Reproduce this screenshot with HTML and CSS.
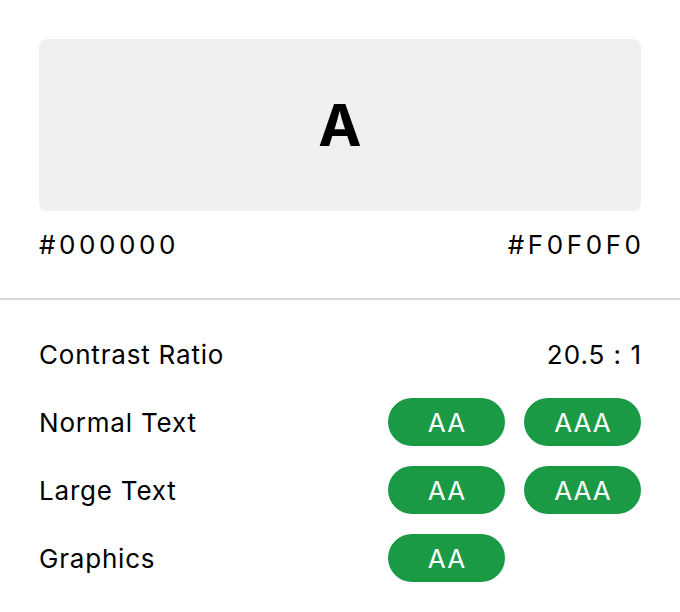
FILE: index.html
```html
<!DOCTYPE html>
<html lang="en">
<head>
<meta charset="utf-8">
<title>Contrast Checker</title>
<link rel="stylesheet" href="styles.css">
</head>
<body>
  <main class="checker">
    <section class="preview">
      <div class="swatch"><span class="sample">A</span></div>
      <div class="hex-row">
        <span class="hex">#000000</span>
        <span class="hex">#F0F0F0</span>
      </div>
    </section>
    <hr class="divider">
    <section class="results">
      <div class="row">
        <span class="label">Contrast Ratio</span>
        <span class="ratio">20.5 : 1</span>
      </div>
      <div class="row">
        <span class="label">Normal Text</span>
        <div class="badges"><span class="badge">AA</span><span class="badge">AAA</span></div>
      </div>
      <div class="row">
        <span class="label">Large Text</span>
        <div class="badges"><span class="badge">AA</span><span class="badge">AAA</span></div>
      </div>
      <div class="row">
        <span class="label">Graphics</span>
        <div class="badges"><span class="badge">AA</span><span class="badge badge-empty"></span></div>
      </div>
    </section>
  </main>
</body>
</html>
```
FILE: styles.css
```css
* { box-sizing: border-box; }

html, body {
  margin: 0;
  background: #ffffff;
}

body {
  font-family: Inter, "Noto Sans", sans-serif;
  color: #000000;
  font-size: 26px;
}

.checker {
  width: 680px;
}

.preview {
  padding: 39px 39px 0;
}

.swatch {
  height: 172px;
  background: #f0f0f0;
  border-radius: 8px;
  display: flex;
  align-items: center;
  justify-content: center;
}

.sample {
  font-size: 58px;
  font-weight: 700;
  line-height: 1;
}

.hex-row {
  display: flex;
  justify-content: space-between;
  padding: 14px 0 33px;
  line-height: 40px;
}

.hex {
  letter-spacing: 3.6px;
}

.hex:last-child {
  margin-right: -3.6px;
}

.divider {
  margin: 0;
  border: 0;
  height: 2px;
  background: #d9d9d9;
}

.results {
  padding: 30px 39px 30px;
  display: flex;
  flex-direction: column;
  gap: 20px;
}

.row {
  height: 48px;
  display: flex;
  align-items: center;
  justify-content: space-between;
}

.label {
  letter-spacing: 0.8px;
}

.ratio {
  letter-spacing: 1px;
  margin-right: -1px;
}

.badges {
  display: flex;
  gap: 19px;
}

.badge {
  width: 117px;
  height: 48px;
  border-radius: 24px;
  background: #1b9a46;
  color: #ffffff;
  display: flex;
  align-items: center;
  justify-content: center;
  font-size: 26px;
  letter-spacing: 1px;
  padding-left: 1px;
}

.badge-empty {
  visibility: hidden;
}
```
